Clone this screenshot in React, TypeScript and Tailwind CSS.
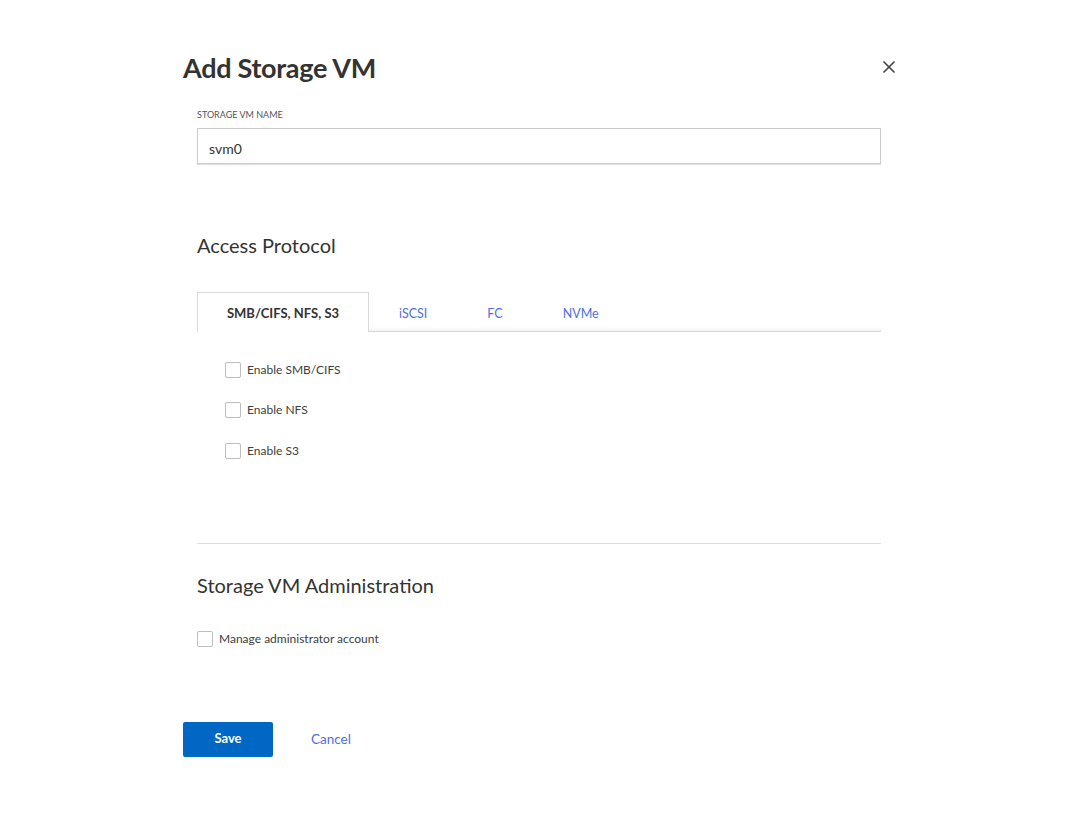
import { X } from "lucide-react";

const font = { fontFamily: "Lato, 'Liberation Sans', sans-serif" };

const Check = ({ label }: { label: string }) => (
  <label className="flex items-center gap-[6px] text-[12px] leading-4 text-[#404040]">
    <span className="w-4 h-4 border border-[#bdbdbd] rounded-[2px] bg-white shrink-0" />
    {label}
  </label>
);

export default function App() {
  const tabs = ["iSCSI", "FC", "NVMe"];
  return (
    <div className="w-[1080px] h-[814px] bg-white" style={font}>
      <div className="pl-[183px] w-[897px] pt-[51px]">
        <div className="flex items-center justify-between h-[34px]">
          <h1 className="text-[27px] font-bold text-[#333] tracking-[-0.3px] mt-[1px]">Add Storage VM</h1>
          <X size={20} strokeWidth={2} className="text-[#444] mr-[-2px] mb-[2px]" />
        </div>

        <div className="pl-[14px] w-[698px]">
          <div className="mt-[23px] text-[9px] uppercase text-[#555]">Storage VM name</div>
          <div className="mt-[6px] h-9 border border-[#ccc] shadow-[0_1px_1px_rgba(0,0,0,0.12)] flex items-center px-[11px] pt-[5px] text-[14px] text-[#333]">
            svm0
          </div>

          <h2 className="mt-[66px] text-[20px] text-[#333]">Access Protocol</h2>

          <div className="mt-[32px] flex h-[40px] border-b border-[#d6d6d6] shadow-[inset_0_-4px_4px_-3px_rgba(0,0,0,0.08)]">
            <div className="w-[172px] border border-[#d9d9d9] border-b-0 bg-white mb-[-1px] flex items-center justify-center pt-[3px] text-[13px] font-bold text-[#333]">
              SMB/CIFS, NFS, S3
            </div>
            <div className="flex items-center pt-[7px] text-[12.5px] text-[#4f6fe0]">
              <span className="ml-[30px]">{tabs[0]}</span>
              <span className="ml-[60px]">{tabs[1]}</span>
              <span className="ml-[60px]">{tabs[2]}</span>
            </div>
          </div>

          <div className="pl-[28px] pt-[30px] flex flex-col gap-[24.5px]">
            <Check label="Enable SMB/CIFS" />
            <Check label="Enable NFS" />
            <Check label="Enable S3" />
          </div>

          <div className="mt-[84px] border-t border-[#ddd]" />

          <h2 className="mt-[26px] text-[20px] text-[#333]">Storage VM Administration</h2>

          <div className="mt-[31px]">
            <Check label="Manage administrator account" />
          </div>
        </div>

        <div className="mt-[75px] flex items-center">
          <button className="w-[90px] h-[35px] bg-[#0067c5] rounded-[2px] text-white text-[13px] font-bold">
            Save
          </button>
          <button className="ml-[38px] text-[13.5px] text-[#4f6fe0]">Cancel</button>
        </div>
      </div>
    </div>
  );
}
